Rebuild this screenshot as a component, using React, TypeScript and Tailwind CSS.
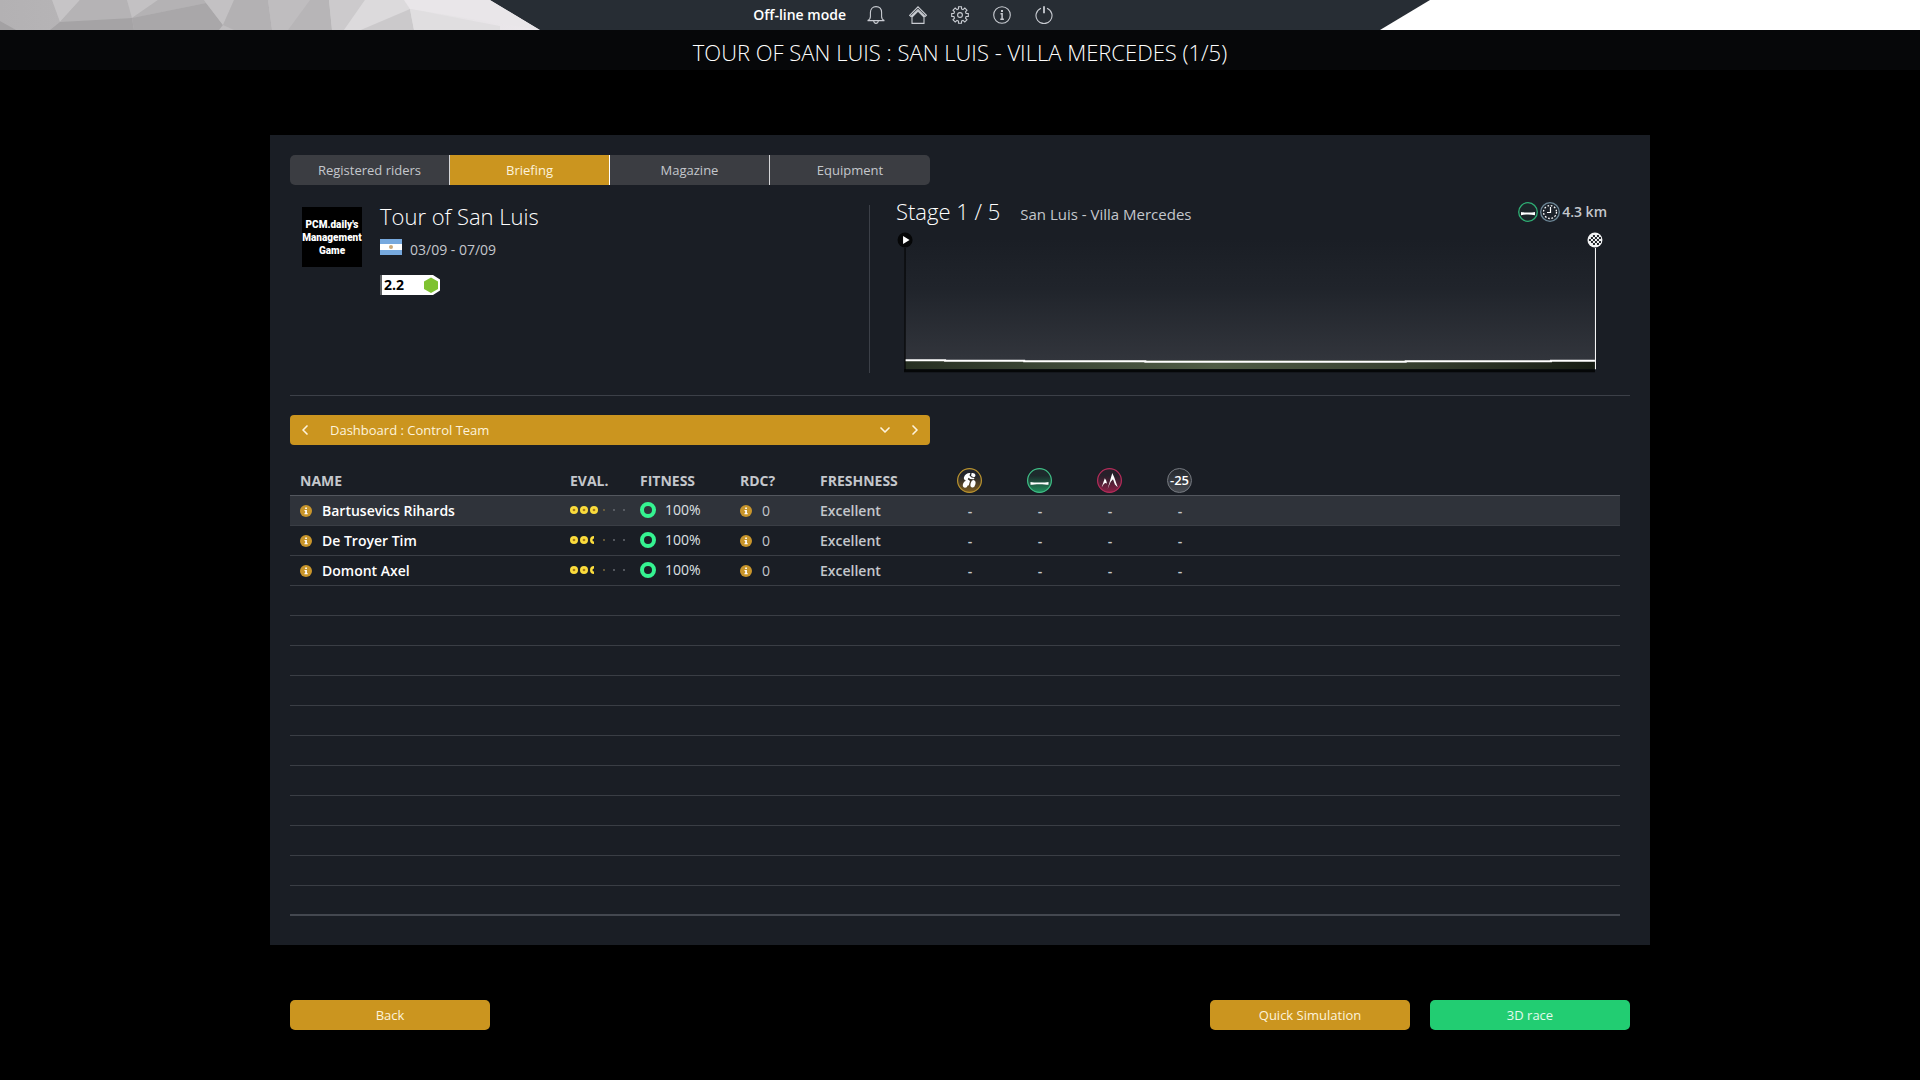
import type { ReactNode } from "react";
import { ChevronDown, ChevronLeft, ChevronRight } from "lucide-react";

const tabs = ["Registered riders", "Briefing", "Magazine", "Equipment"];

const riders = [
  { name: "Bartusevics Rihards", stars: 3, fitness: "100%", rdc: 0, freshness: "Excellent" },
  { name: "De Troyer Tim", stars: 2.5, fitness: "100%", rdc: 0, freshness: "Excellent" },
  { name: "Domont Axel", stars: 2.5, fitness: "100%", rdc: 0, freshness: "Excellent" },
];

const EMPTY_ROWS = 11;

const Icon = ({ children }: { children: ReactNode }) => (
  <svg
    viewBox="0 0 18 18"
    className="size-[18px]"
    fill="none"
    stroke="currentColor"
    strokeWidth="1.1"
    aria-hidden="true"
  >
    {children}
  </svg>
);

const menu = [
  {
    label: "Notifications",
    icon: (
      <Icon>
        <path d="M.6 14.600c1.800-.6 2.800-1.600 2.800-4V6.600C3.400 3 5.600.6 9 .6s5.600 2.400 5.600 6v4c0 2.400 1 3.400 2.800 4zM6.600 14.800c.2 1.700 1.200 2.600 2.400 2.600s2.200-.9 2.400-2.600" />
      </Icon>
    ),
  },
  {
    label: "Home",
    icon: (
      <Icon>
        <path d="M.6 9.300 9 .9l8.400 8.400-1.300 1.200L9 3.500l-7.100 7zM3 11l6-5.800 6 5.800v6.400H3z" />
      </Icon>
    ),
  },
  {
    label: "Settings",
    icon: (
      <Icon>
        <path d="M7.500.7h3v2.200l1.500.7L13.800 2l2.200 2.200-1.500 1.700.6 1.600h2.200v3h-2.200l-.6 1.600 1.500 1.700-2.200 2.200-1.800-1.600-1.500.7v2.200h-3v-2.200L6 14.400 4.200 16 2 13.800l1.500-1.700-.6-1.600H.7v-3h2.200l.6-1.600L2 4.200 4.200 2 6 3.600l1.500-.7z" />
        <circle cx="9" cy="9" r="2.400" />
      </Icon>
    ),
  },
  {
    label: "Information",
    icon: (
      <Icon>
        <circle cx="9" cy="9" r="8.300" />
        <path d="M9 4v2" strokeWidth="2" />
        <path d="M7.500 7.800h1.600v5.400M7.300 13.300h3.600" strokeWidth="1.500" />
      </Icon>
    ),
  },
  {
    label: "Quit",
    icon: (
      <Icon>
        <path d="M6 2.200A8 8 0 1 0 12 2.200" />
        <path d="M9 .2v7" strokeWidth="1.800" />
      </Icon>
    ),
  },
];

const TopBar = () => (
  <header className="grid grid-cols-[540px_1fr_540px] h-[30px] bg-[#272d34]">
    <svg viewBox="0 0 540 30" className="h-[30px] w-[540px]" aria-hidden="true">
      <defs>
        <clipPath id="bevel">
          <path d="M0 0h490l50 30H0z" />
        </clipPath>
        <linearGradient id="facets" x1="0" x2="1" y1="0" y2="0">
          <stop offset="0" stopColor="#b3b1b3" />
          <stop offset=".5" stopColor="#c0bec0" />
          <stop offset=".8" stopColor="#e4e2e4" />
          <stop offset="1" stopColor="#ece8ec" />
        </linearGradient>
      </defs>
      <g clipPath="url(#bevel)">
        <path d="M0 0h540v30H0z" fill="url(#facets)" />
        <path d="M0 21l16 9H0z" fill="#a3a1a3" />
        <path d="M52 0h28L60 22z" fill="#c6c4c6" />
        <path d="M80 0h47l5 18-72 4z" fill="#b5b3b5" />
        <path d="M60 22l72-4 2 12H50z" fill="#a5a3a5" />
        <path d="M127 0h31l-26 18z" fill="#c3c1c3" />
        <path d="M158 0h46l2 3-74 15z" fill="#b4b2b4" />
        <path d="M132 18l74-15 17 22-4 5h-85z" fill="#a9a7a9" />
        <path d="M204 0h30l-11 25z" fill="#c3c1c3" />
        <path d="M234 0h34l4 30h-38l-11-5z" fill="#b3b1b3" />
        <path d="M268 0h61l-41 30h-16z" fill="#bfbdbf" />
        <path d="M310 0h19l3 30h-44z" fill="#b7b5b7" />
        <path d="M329 0h36l-21 30h-12z" fill="#cccacc" />
        <path d="M365 0h39l6 9-49 21h-17z" fill="#dcdadc" />
        <path d="M410 9l4 21h-53z" fill="#cbc9cb" />
        <path d="M404 0h86l50 30-130-21z" fill="#e9e6e9" />
        <path d="M410 9l90 17v4h-86z" fill="#e0dee0" />
      </g>
    </svg>
    <nav className="grid grid-cols-[1fr_auto_1fr] items-center">
      <span className="justify-self-end mr-[9px] text-sm font-semibold text-white">Off-line mode</span>
      <div className="flex text-[#c9ccd2]">
        {menu.map((item) => (
          <button key={item.label} aria-label={item.label} className="flex w-[42px] h-[30px] items-center justify-center">
            {item.icon}
          </button>
        ))}
      </div>
    </nav>
    <svg viewBox="0 0 540 30" className="h-[30px] w-[540px]" aria-hidden="true">
      <path d="M50 0h490v30H0z" fill="#fff" />
    </svg>
  </header>
);

const InfoDot = () => (
  <svg viewBox="0 0 12 12" className="size-3 shrink-0" aria-hidden="true">
    <circle cx="6" cy="6" r="6" fill="#c8952b" />
    <path d="M5.200 2.500h1.700v1.400H5.200zM4.500 5h2.400v3.300h.9v1H4.400v-1h.8V6h-.7z" fill="#fff" />
  </svg>
);

const Stars = ({ value }: { value: number }) => (
  <svg viewBox="0 0 58 8" className="w-[58px] h-2" role="img" aria-label={`${value} / 6`}>
    {[0, 1, 2, 3, 4, 5].map((i) => {
      const cx = 4 + i * 10;
      if (value >= i + 1) {
        return (
          <g key={i}>
            <circle cx={cx} cy="4" r="4" fill="#fbdc3c" />
            <circle cx={cx} cy="4" r="1.300" fill="#a87a1c" />
          </g>
        );
      }
      if (value > i) {
        return <path key={i} d={`M${cx} 0a4 4 0 0 0 0 8V5.500a1.500 1.500 0 0 1 0-3z`} fill="#fbdc3c" />;
      }
      return <circle key={i} cx={cx} cy="4" r="1" fill={i === 3 ? "#7b6a3c" : "#666a70"} />;
    })}
  </svg>
);

const columnIcons = [
  {
    key: "rider",
    icon: (
      <svg viewBox="0 0 25 25" className="size-[25px]" role="img" aria-label="Rider">
        <defs>
          <linearGradient id="riderFill" x1="0" x2="0" y1="0" y2="1">
            <stop offset=".3" stopColor="#22242a" />
            <stop offset="1" stopColor="#7d5c1e" />
          </linearGradient>
        </defs>
        <circle cx="12.500" cy="12.500" r="11.900" fill="url(#riderFill)" stroke="#b9932f" strokeWidth="1.200" />
        <g fill="#fff">
          <path d="M14.500 5.200c1.700-.5 3.600.3 3.900 1.900.2 1.200-.5 2-1.700 2.200l-2.600-1.200z" />
          <path d="M7 9.200C7.800 6.500 10 4.800 13.400 5l-.9 2.600 2 1.900 2.900.5-.4 1.300-3.700-.3-1.700-1.300-.9 1.500 2.300 1.800-1.300 4.400-1.500-.4.7-3.200L8 12.200C6.900 11.400 6.700 10.300 7 9.200z" />
          <ellipse cx="8.600" cy="16.200" rx="2.500" ry="3.600" transform="rotate(22 8.600 16.200)" />
          <ellipse cx="16" cy="15.800" rx="2.400" ry="3.800" transform="rotate(15 16 15.800)" />
        </g>
      </svg>
    ),
  },
  {
    key: "flat",
    icon: (
      <svg viewBox="0 0 25 25" className="size-[25px]" role="img" aria-label="Flat">
        <defs>
          <linearGradient id="flatFill" x1="0" x2="0" y1="0" y2="1">
            <stop offset=".3" stopColor="#1d2a2c" />
            <stop offset="1" stopColor="#1f8f5c" />
          </linearGradient>
        </defs>
        <circle cx="12.500" cy="12.500" r="11.900" fill="url(#flatFill)" stroke="#3fbf86" strokeWidth="1.200" />
        <path d="M3.500 14c3 .8 15 .8 18 0v2.800c-4-.9-14-.9-18 0z" fill="#fff" />
      </svg>
    ),
  },
  {
    key: "mountain",
    icon: (
      <svg viewBox="0 0 25 25" className="size-[25px]" role="img" aria-label="Mountain">
        <defs>
          <linearGradient id="mountainFill" x1="0" x2="0" y1="0" y2="1">
            <stop offset=".3" stopColor="#27202a" />
            <stop offset="1" stopColor="#8a1f46" />
          </linearGradient>
        </defs>
        <circle cx="12.500" cy="12.500" r="11.900" fill="url(#mountainFill)" stroke="#b52c5a" strokeWidth="1.200" />
        <path
          d="M4.600 19.500l3.200-9.300 1.400 2.400.8 2.900-1.800-.5-1.400.9zM10.600 21l4.700-16 2 4.500 3.400 9.700-2.800-2.700-1.900-5.300-2.300 2.500z"
          fill="#fff"
        />
      </svg>
    ),
  },
  {
    key: "young",
    icon: (
      <span className="flex size-[25px] items-center justify-center rounded-full border border-[#767a81] bg-linear-to-b from-[#24282e] to-[#484c52] text-[13px] font-semibold text-white">
        -25
      </span>
    ),
  },
];

const StageProfile = () => (
  <svg viewBox="0 0 710 142" className="w-full mt-1" role="img" aria-label="Stage profile">
    <defs>
      <linearGradient id="sky" x1="0" x2="0" y1="0" y2="1">
        <stop offset="0" stopColor="#1a1e25" />
        <stop offset=".4" stopColor="#20242b" />
        <stop offset="1" stopColor="#32353c" />
      </linearGradient>
      <linearGradient id="grass" x1="0" x2="1" y1="0" y2="0">
        <stop offset="0" stopColor="#262f22" />
        <stop offset=".2" stopColor="#3b4635" />
        <stop offset=".45" stopColor="#4f5c45" />
        <stop offset=".75" stopColor="#343d2d" />
        <stop offset="1" stopColor="#171d14" />
      </linearGradient>
    </defs>
    <path d="M9 9h689v121H9z" fill="url(#sky)" />
    <path d="M9 129h689v9H9z" fill="url(#grass)" />
    <path d="M8 138h690v3H8z" fill="#050708" />
    <path d="M9 129h40v.5h79v.5h121v.5h260v-.5h145v-.5h44" fill="none" stroke="#fff" strokeWidth="2" />
    <path d="M9 17v122" stroke="#000" />
    <circle cx="9" cy="9" r="7.500" fill="#050607" />
    <path d="M7 5l6.500 4L7 13z" fill="#fff" />
    <path d="M698.500 17v121" stroke="#fff" />
    <circle cx="698" cy="9" r="7.500" fill="#f2f3f4" />
    <g fill="#22262b">
      <path d="M696 4h2v2h-2zM700 4h2v2h-2zM694 6h2v2h-2zM698 6h2v2h-2zM702 6h2v2h-2zM692 8h2v2h-2zM696 8h2v2h-2zM700 8h2v2h-2zM694 10h2v2h-2zM698 10h2v2h-2zM702 10h2v2h-2zM696 12h2v2h-2zM700 12h2v2h-2z" />
    </g>
  </svg>
);

const RaceInfo = () => (
  <div className="flex mt-2 pt-[2px] pl-3 border-r border-[#3c4048]">
    <div className="flex size-[60px] shrink-0 items-center justify-center bg-black text-center font-['Roboto'] text-[10px] leading-[13px] font-black text-white">
      PCM.daily's
      <br />
      Management
      <br />
      Game
    </div>
    <div className="ml-[18px] -mt-[3px]">
      <h2 className="text-[22px] leading-6 font-light text-white">Tour of San Luis</h2>
      <div className="flex mt-[9px] gap-2">
        <svg viewBox="0 0 22 16" className="w-[22px] h-4 mt-[2px]" role="img" aria-label="Argentina">
          <path d="M0 0h22v16H0z" fill="#77a9de" />
          <path d="M0 5h22v6H0z" fill="#fff" />
          <circle cx="11" cy="8" r="2" fill="#c9a878" />
        </svg>
        <p className="text-sm leading-[26px] text-[#c4c7cc]">03/09 - 07/09</p>
      </div>
      <div className="relative mt-3 w-[60px] h-5">
        <svg viewBox="0 0 60 20" className="w-[60px] h-5" aria-hidden="true">
          <path d="M0 0h53l7 4.500v11L53 20H0z" fill="#fff" />
          <path d="M0 0h2v20H0z" fill="#5d6063" />
          <path d="M51 2.500l7 4v7.500l-7 4-7-4V6.500z" fill="#7fc231" />
        </svg>
        <span className="absolute left-1 top-0 text-sm leading-5 font-bold text-black">2.2</span>
      </div>
    </div>
  </div>
);

const StageInfo = () => (
  <div className="pl-[26px] pr-[23px]">
    <div className="flex h-[30px] items-baseline leading-7">
      <h2 className="text-[22px] font-light text-white">Stage 1 / 5</h2>
      <p className="ml-5 text-[15px] text-[#c4c7cc]">San Luis - Villa Mercedes</p>
      <div className="flex ml-auto self-center items-center gap-[2px]">
        <svg viewBox="0 0 20 20" className="size-5" role="img" aria-label="Flat">
          <circle cx="10" cy="10" r="9.300" fill="#1b2428" stroke="#2fae74" strokeWidth="1.300" />
          <path d="M3 10c3 .8 11 .8 14 0v3.200c-4-.9-10-.9-14 0z" fill="#fff" />
        </svg>
        <svg viewBox="0 0 20 20" className="size-5" role="img" aria-label="Time trial">
          <circle cx="10" cy="10" r="9.300" fill="#1d232b" stroke="#6d8797" strokeWidth="1.300" />
          <circle cx="10" cy="10" r="6.500" fill="none" stroke="#fff" strokeWidth="1.300" strokeDasharray="1.700 1.703" />
          <path d="M10.500 5v5.500H7" fill="none" stroke="#fff" strokeWidth="1.200" />
        </svg>
        <span className="text-sm font-semibold text-[#c4c7cc]">4.3 km</span>
      </div>
    </div>
    <StageProfile />
  </div>
);

const DashboardPicker = () => (
  <div className="flex w-full max-w-[640px] h-[30px] rounded bg-[#cb951f] text-[#fdf3dc]">
    <button aria-label="Previous view" className="flex w-[30px] items-center justify-center">
      <ChevronLeft className="size-4" strokeWidth={2.5} />
    </button>
    <div className="relative flex-1">
      <select
        aria-label="View"
        className="w-full h-full appearance-none bg-transparent pt-[2px] pl-[10px] text-[13px] text-[#fdf3dc]"
      >
        <option>Dashboard : Control Team</option>
      </select>
      <ChevronDown className="absolute right-[7px] top-[7px] size-4 pointer-events-none" strokeWidth={2.5} />
    </div>
    <button aria-label="Next view" className="flex w-[30px] items-center justify-center">
      <ChevronRight className="size-4" strokeWidth={2.5} />
    </button>
  </div>
);

const RidersTable = () => (
  <div className="mt-5 pr-[10px]">
    <table className="w-full table-fixed border-separate border-spacing-0 text-sm text-[#c4c7cc] [&_td]:border-b [&_td]:border-[#3a3e45] [&_td]:p-0 [&_th]:p-0">
      <colgroup>
        <col className="w-[280px]" />
        <col className="w-[70px]" />
        <col className="w-[100px]" />
        <col className="w-20" />
        <col className="w-[115px]" />
        <col className="w-[70px]" />
        <col className="w-[70px]" />
        <col className="w-[70px]" />
        <col className="w-[70px]" />
        <col />
      </colgroup>
      <thead>
        <tr className="h-[31px] text-left [&_th]:border-b [&_th]:border-[#53575e] [&_th]:font-bold">
          <th className="pt-[2px]!">
            <span className="ml-[10px]">NAME</span>
          </th>
          <th className="pt-[2px]!">EVAL.</th>
          <th className="pt-[2px]!">FITNESS</th>
          <th className="pt-[2px]!">RDC?</th>
          <th className="pt-[2px]!">FRESHNESS</th>
          {columnIcons.map((col) => (
            <th key={col.key}>
              <div className="ml-[22px]">{col.icon}</div>
            </th>
          ))}
          <th />
        </tr>
      </thead>
      <tbody>
        {riders.map((rider, i) => (
          <tr key={rider.name} className={i === 0 ? "h-[30px] bg-[#2f333a]" : "h-[30px]"}>
            <td>
              <div className="flex ml-[10px] items-center gap-[10px] font-semibold text-white">
                <InfoDot />
                {rider.name}
              </div>
            </td>
            <td className="pb-[2px]!">
              <div className="flex items-center">
                <Stars value={rider.stars} />
              </div>
            </td>
            <td className="pb-[2px]!">
              <div className="flex items-center gap-[9px] text-[#dfe1e4]">
                <span className="size-4 rounded-full border-4 border-[#35f391]" />
                {rider.fitness}
              </div>
            </td>
            <td>
              <div className="flex items-center gap-[10px]">
                <InfoDot />
                {rider.rdc}
              </div>
            </td>
            <td className="font-semibold">{rider.freshness}</td>
            {columnIcons.map((col) => (
              <td key={col.key} className="text-center font-semibold">
                -
              </td>
            ))}
            <td />
          </tr>
        ))}
        {Array.from({ length: EMPTY_ROWS }, (_, i) => (
          <tr key={i} className="h-[30px] last:[&_td]:border-b-2 last:[&_td]:border-[#444850]">
            <td colSpan={10} />
          </tr>
        ))}
      </tbody>
    </table>
  </div>
);

const actionClass = "w-[200px] h-[30px] pt-[2px] rounded-[5px] text-[13px]";

export default function App() {
  return (
    <div className="min-h-screen bg-black font-['Open_Sans',sans-serif]">
      <TopBar />
      <h1 className="h-10 pt-[2px] bg-[#060709] text-center text-[22px] leading-[40px] font-light text-white">
        TOUR OF SAN LUIS : SAN LUIS - VILLA MERCEDES (1/5)
      </h1>

      <div className="max-w-[1380px] mx-auto mt-[65px]">
        <main className="p-5 pb-[29px] bg-[#1a1e25]">
          <div role="tablist" className="flex max-w-[640px] h-[30px] overflow-hidden rounded-[5px] bg-[#3b3d42]">
            {tabs.map((tab) => (
              <button
                key={tab}
                role="tab"
                aria-selected={tab === "Briefing"}
                className="w-1/4 pt-[2px] border-r border-[#d5d6d8] text-[13px] text-[#c4c7cc] last:border-r-0 aria-selected:border-white aria-selected:bg-[#cb951f] aria-selected:text-[#fdf3dc]"
              >
                {tab}
              </button>
            ))}
          </div>

          <section className="grid grid-cols-[580px_1fr] mt-3">
            <RaceInfo />
            <StageInfo />
          </section>

          <hr className="mt-[22px] mb-[19px] border-[#3c4048]" />

          <DashboardPicker />
          <RidersTable />
        </main>

        <footer className="flex gap-5 px-5 mt-[55px] pb-[50px]">
          <button className={`${actionClass} mr-auto bg-[#cb951f] text-[#fdf3dc]`}>Back</button>
          <button className={`${actionClass} bg-[#cb951f] text-[#fdf3dc]`}>Quick Simulation</button>
          <button className={`${actionClass} bg-[#22cd72] text-[#e2fbee]`}>3D race</button>
        </footer>
      </div>
    </div>
  );
}
